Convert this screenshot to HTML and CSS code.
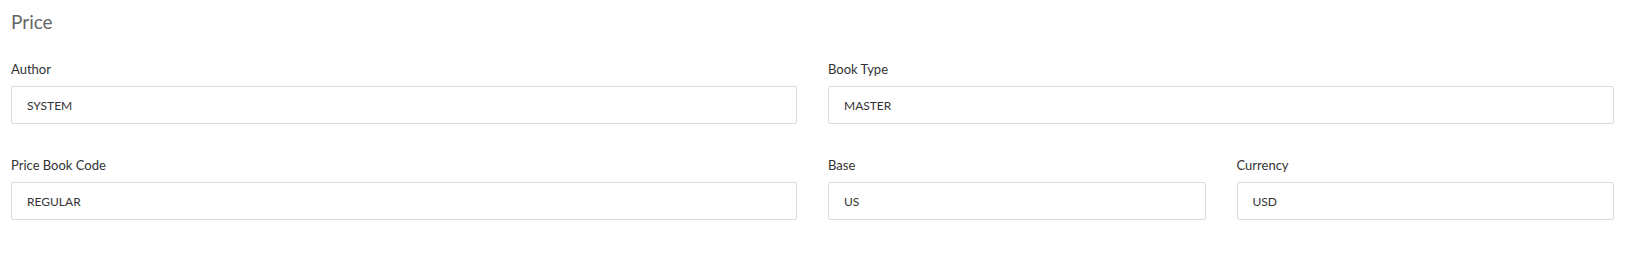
FILE: index.html
```html
<html lang="en">
<head>
  <meta charset="UTF-8">
  <title>Price</title>
  <link rel="stylesheet" href="styles.css">
</head>
<body>
  <div class="panel">
    <h2 class="panel-title">Price</h2>

    <div class="row">
      <div class="field">
        <label>Author</label>
        <div class="input">SYSTEM</div>
      </div>
      <div class="field">
        <label>Book Type</label>
        <div class="input">MASTER</div>
      </div>
    </div>

    <div class="row">
      <div class="field">
        <label>Price Book Code</label>
        <div class="input">REGULAR</div>
      </div>
      <div class="sub-row">
        <div class="field">
          <label>Base</label>
          <div class="input">US</div>
        </div>
        <div class="field">
          <label>Currency</label>
          <div class="input">USD</div>
        </div>
      </div>
    </div>
  </div>
</body>
</html>
```

FILE: styles.css
```css
body {
  background: #fff;
  color: #333;
  font-family: Lato, 'Open Sans', sans-serif;
  margin: 0;
}

.panel {
  padding: 10px 14px 0 11px;
}

.panel-title {
  margin: 0 0 28px;
  font-size: 19px;
  line-height: 23px;
  font-weight: 400;
  color: #666;
}

.row {
  display: grid;
  grid-template-columns: 1fr 1fr;
  gap: 31px;
  margin-bottom: 33px;
}

.sub-row {
  display: grid;
  grid-template-columns: 1fr 1fr;
  gap: 31px;
}

.field label {
  display: block;
  font-size: 13px;
  line-height: 16px;
  color: #333;
  margin-bottom: 9px;
}

.input {
  box-sizing: border-box;
  height: 38px;
  display: flex;
  align-items: center;
  padding: 0 15px;
  border: 1px solid #dcdcdc;
  border-radius: 2px;
  font-size: 12px;
  color: #333;
}
```
